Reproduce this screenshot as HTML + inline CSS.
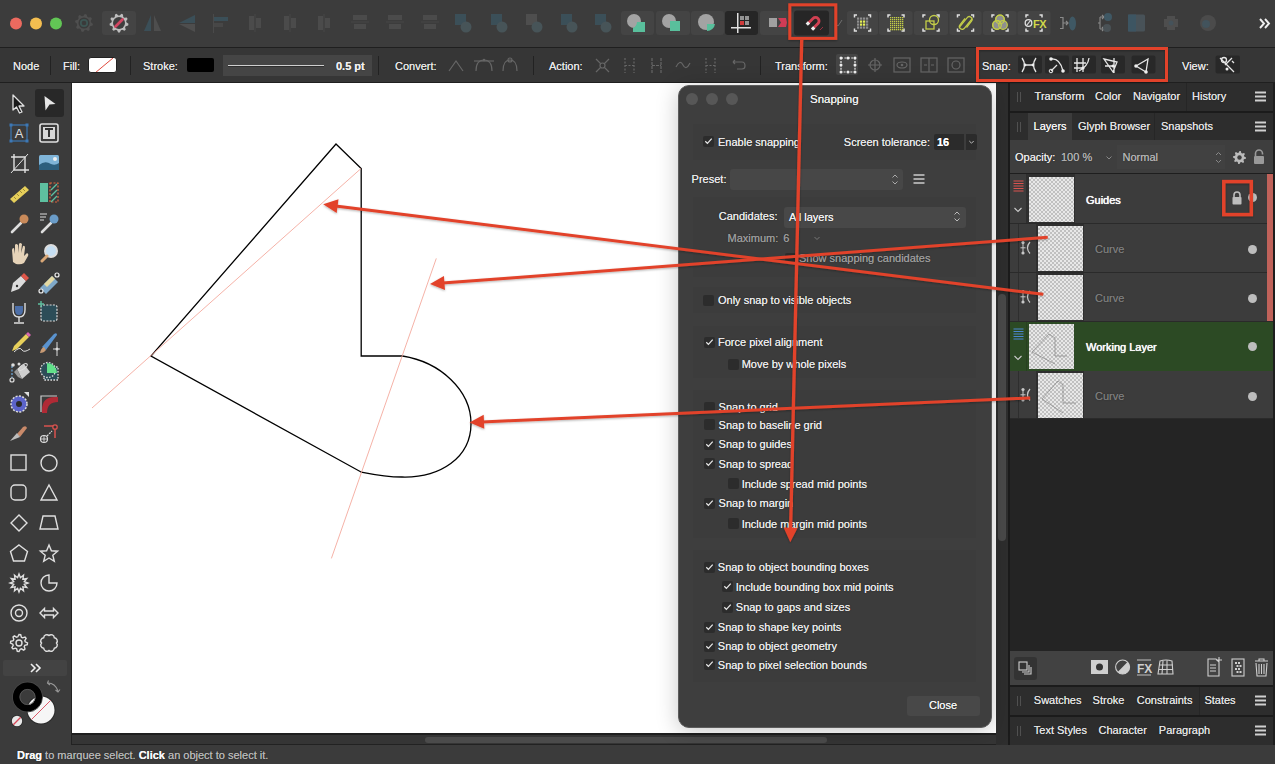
<!DOCTYPE html>
<html><head><meta charset="utf-8">
<style>
*{margin:0;padding:0;box-sizing:border-box}
html,body{width:1275px;height:764px;overflow:hidden;background:#3b3b3b;font-family:"Liberation Sans",sans-serif;color:#e6e6e6}
.a{position:absolute}
.t{position:absolute;font-size:11px;line-height:13px;white-space:nowrap;text-shadow:0 0 0.5px currentColor,0 0 1.2px rgba(0,0,0,0.55)}
svg{position:absolute;overflow:visible}
</style></head><body>
<div class="a" style="left:0;top:0;width:1275px;height:47px;background:#3c3c3c"></div>
<svg class="a" style="left:0;top:0" width="1275" height="47"><circle cx="16" cy="23.5" r="6" fill="#ec6a5f"/><circle cx="36" cy="23.5" r="6" fill="#f4be50"/><circle cx="56" cy="23.5" r="6" fill="#62c655"/><polygon points="92.96,23.88 92.61,25.61 90.19,26.31 89.43,27.45 89.71,29.96 88.24,30.94 86.04,29.72 84.69,29.99 83.12,31.96 81.39,31.61 80.69,29.19 79.55,28.43 77.04,28.71 76.06,27.24 77.28,25.04 77.01,23.69 75.04,22.12 75.39,20.39 77.81,19.69 78.57,18.55 78.29,16.04 79.76,15.06 81.96,16.28 83.31,16.01 84.88,14.04 86.61,14.39 87.31,16.81 88.45,17.57 90.96,17.29 91.94,18.76 90.72,20.96 90.99,22.31" fill="#4f4f4f"/><circle cx="84" cy="23" r="5.5" fill="#3a3a3a"/><circle cx="84" cy="23" r="3.2" fill="none" stroke="#3d5553" stroke-width="1.8"/><rect x="102" y="11" width="34" height="24" rx="3" fill="#444"/><polygon points="128.46,23.83 128.18,25.46 125.72,26.13 125.07,27.25 125.72,29.72 124.45,30.78 122.13,29.72 120.92,30.16 119.83,32.46 118.17,32.46 117.08,30.16 115.87,29.72 113.55,30.78 112.28,29.72 112.93,27.25 112.28,26.13 109.82,25.46 109.54,23.83 111.62,22.35 111.84,21.08 110.39,18.99 111.22,17.55 113.76,17.76 114.75,16.93 114.99,14.39 116.54,13.82 118.35,15.62 119.65,15.62 121.46,13.82 123.01,14.39 123.25,16.93 124.24,17.76 126.78,17.55 127.61,18.99 126.16,21.08 126.38,22.35" fill="#bdbdbd"/><circle cx="119" cy="23" r="6" fill="#3e3e3e"/><line x1="115.5" y1="26.5" x2="122.5" y2="19.5" stroke="#d24662" stroke-width="2.8" stroke-linecap="round"/><path d="M151 15 L151 31 L144 31 Z" fill="#3b4f58"/><path d="M154 15 L154 31 L161 31 Z" fill="#4e4e4e"/><path d="M195 15 L179 23 L195 23 Z" fill="#3b4f58"/><path d="M195 24 L179 24 L195 32 Z" fill="#4e4e4e"/><rect x="213" y="14" width="1" height="19" fill="#4a4a4a"/><rect x="214" y="17" width="14" height="4" fill="#3b4f58"/><rect x="214" y="23" width="9" height="4" fill="#474747"/><rect x="249" y="16" width="5" height="14" fill="#4b4b4b"/><rect x="256" y="18" width="5" height="10" fill="#4b4b4b"/><rect x="254.5" y="14" width="1" height="18" fill="#474747"/><rect x="284" y="16" width="5" height="14" fill="#4b4b4b"/><rect x="291" y="18" width="5" height="10" fill="#4b4b4b"/><rect x="289.5" y="14" width="1" height="18" fill="#474747"/><rect x="318" y="16" width="5" height="14" fill="#4b4b4b"/><rect x="325" y="18" width="5" height="10" fill="#4b4b4b"/><rect x="323.5" y="14" width="1" height="18" fill="#474747"/><rect x="353" y="15" width="14" height="5" fill="#4b4b4b"/><rect x="354" y="24" width="12" height="5" fill="#4b4b4b"/><rect x="351" y="21.5" width="18" height="1" fill="#474747"/><rect x="388" y="15" width="14" height="5" fill="#4b4b4b"/><rect x="389" y="24" width="12" height="5" fill="#4b4b4b"/><rect x="386" y="21.5" width="18" height="1" fill="#474747"/><rect x="423" y="15" width="14" height="5" fill="#4b4b4b"/><rect x="424" y="24" width="12" height="5" fill="#4b4b4b"/><rect x="421" y="21.5" width="18" height="1" fill="#474747"/><rect x="455" y="14" width="11" height="11" fill="#3b4f58"/><circle cx="466" cy="27" r="5.5" fill="#475458"/><rect x="491" y="14" width="11" height="11" fill="#3b4f58"/><circle cx="502" cy="27" r="5.5" fill="#475458"/><rect x="526" y="14" width="11" height="11" fill="#4e4e4e"/><circle cx="537" cy="27" r="5.5" fill="#475458"/><rect x="561" y="14" width="11" height="11" fill="#3b4f58"/><circle cx="572" cy="27" r="5.5" fill="#475458"/><rect x="595" y="14" width="11" height="11" fill="#3b4f58"/><circle cx="606" cy="27" r="5.5" fill="#475458"/><rect x="621" y="11" width="33" height="24" rx="3" fill="#444"/><rect x="656" y="11" width="34" height="24" rx="3" fill="#444"/><rect x="691" y="11" width="33" height="24" rx="3" fill="#444"/><circle cx="634" cy="21" r="7" fill="#a3a3a3"/><path d="M637 22 L645 22 L645 32 L633 32 L633 28 A7 7 0 0 0 637 22Z" fill="#59bf9c"/><circle cx="669" cy="21" r="7" fill="#a3a3a3"/><rect x="670" y="21" width="10" height="10" fill="#59bf9c"/><circle cx="706" cy="22" r="8" fill="#a3a3a3"/><path d="M707 24 L715 24 A8 8 0 0 1 707 31 Z" fill="#59bf9c"/><rect x="725" y="11" width="33" height="24" rx="3" fill="#262626"/><rect x="737" y="13" width="1.5" height="20" fill="#e0e0e0"/><rect x="731" y="27" width="20" height="1.5" fill="#e0e0e0"/><rect x="740" y="16" width="4" height="4" fill="#949494"/><rect x="745" y="16" width="4" height="4" fill="#949494"/><rect x="740" y="21" width="4" height="4" fill="#cf3b3b"/><rect x="745" y="21" width="4" height="4" fill="#949494"/><rect x="760" y="11" width="33" height="24" rx="3" fill="#444"/><rect x="769" y="18" width="8" height="9" fill="#a0a0a0"/><path d="M778 18 L786 18 L787 22.5 L786 27 L778 27 L781 22.5Z" fill="#cf3b55"/><rect x="794" y="10.5" width="35" height="25" rx="3" fill="#262626"/><path d="M808 23.5 L813 18.5 A3.5 3.5 0 0 1 818 23.5 L813 28.5" fill="none" stroke="#d04052" stroke-width="2.8"/><rect x="806.3" y="21.8" width="3.2" height="3.2" fill="#eee" transform="rotate(45 807.9 23.4)"/><rect x="811.5" y="27" width="3.2" height="3.2" fill="#eee" transform="rotate(45 813.1 28.6)"/><path d="M820 30 L823 27" stroke="#9a3040" stroke-width="1"/><path d="M836 24 L838 26 L842 20" fill="none" stroke="#707070" stroke-width="1"/><rect x="847" y="11" width="31" height="24" rx="2.5" fill="#444"/><rect x="879" y="11" width="33.5" height="24" rx="2.5" fill="#444"/><rect x="914" y="11" width="34" height="24" rx="2.5" fill="#444"/><rect x="949.5" y="11" width="32.0" height="24" rx="2.5" fill="#444"/><rect x="983" y="11" width="33.5" height="24" rx="2.5" fill="#444"/><rect x="1017.5" y="11" width="33.0" height="24" rx="2.5" fill="#444"/><path d="M854.5 17.5 L854.5 15 L857.0 15" fill="none" stroke="#e0e0e0" stroke-width="1.5"/><path d="M854.5 28.5 L854.5 31 L857.0 31" fill="none" stroke="#e0e0e0" stroke-width="1.5"/><path d="M870.5 17.5 L870.5 15 L868.0 15" fill="none" stroke="#e0e0e0" stroke-width="1.5"/><path d="M870.5 28.5 L870.5 31 L868.0 31" fill="none" stroke="#e0e0e0" stroke-width="1.5"/><rect x="857" y="17.5" width="2.2" height="2.2" fill="#8f8f8f"/><rect x="857" y="20.5" width="2.2" height="2.2" fill="#8f8f8f"/><rect x="857" y="23.5" width="2.2" height="2.2" fill="#8f8f8f"/><rect x="857" y="26.5" width="2.2" height="2.2" fill="#8f8f8f"/><rect x="860" y="17.5" width="2.2" height="2.2" fill="#8f8f8f"/><rect x="860" y="20.5" width="2.2" height="2.2" fill="#e4ee57"/><rect x="860" y="23.5" width="2.2" height="2.2" fill="#e4ee57"/><rect x="860" y="26.5" width="2.2" height="2.2" fill="#8f8f8f"/><rect x="863" y="17.5" width="2.2" height="2.2" fill="#8f8f8f"/><rect x="863" y="20.5" width="2.2" height="2.2" fill="#e4ee57"/><rect x="863" y="23.5" width="2.2" height="2.2" fill="#e4ee57"/><rect x="863" y="26.5" width="2.2" height="2.2" fill="#8f8f8f"/><rect x="866" y="17.5" width="2.2" height="2.2" fill="#8f8f8f"/><rect x="866" y="20.5" width="2.2" height="2.2" fill="#8f8f8f"/><rect x="866" y="23.5" width="2.2" height="2.2" fill="#8f8f8f"/><rect x="866" y="26.5" width="2.2" height="2.2" fill="#8f8f8f"/><path d="M888 17.5 L888 15 L890.5 15" fill="none" stroke="#e0e0e0" stroke-width="1.5"/><path d="M888 28.5 L888 31 L890.5 31" fill="none" stroke="#e0e0e0" stroke-width="1.5"/><path d="M904 17.5 L904 15 L901.5 15" fill="none" stroke="#e0e0e0" stroke-width="1.5"/><path d="M904 28.5 L904 31 L901.5 31" fill="none" stroke="#e0e0e0" stroke-width="1.5"/><rect x="890.0" y="17.0" width="1.3" height="1.3" fill="#c3cd48"/><rect x="890.0" y="19.0" width="1.3" height="1.3" fill="#c3cd48"/><rect x="890.0" y="21.0" width="1.3" height="1.3" fill="#c3cd48"/><rect x="890.0" y="23.0" width="1.3" height="1.3" fill="#c3cd48"/><rect x="890.0" y="25.0" width="1.3" height="1.3" fill="#c3cd48"/><rect x="890.0" y="27.0" width="1.3" height="1.3" fill="#c3cd48"/><rect x="890.0" y="29.0" width="1.3" height="1.3" fill="#c3cd48"/><rect x="892.0" y="17.0" width="1.3" height="1.3" fill="#c3cd48"/><rect x="892.0" y="19.0" width="1.3" height="1.3" fill="#c3cd48"/><rect x="892.0" y="21.0" width="1.3" height="1.3" fill="#c3cd48"/><rect x="892.0" y="23.0" width="1.3" height="1.3" fill="#c3cd48"/><rect x="892.0" y="25.0" width="1.3" height="1.3" fill="#c3cd48"/><rect x="892.0" y="27.0" width="1.3" height="1.3" fill="#c3cd48"/><rect x="892.0" y="29.0" width="1.3" height="1.3" fill="#c3cd48"/><rect x="894.0" y="17.0" width="1.3" height="1.3" fill="#c3cd48"/><rect x="894.0" y="19.0" width="1.3" height="1.3" fill="#c3cd48"/><rect x="894.0" y="21.0" width="1.3" height="1.3" fill="#c3cd48"/><rect x="894.0" y="23.0" width="1.3" height="1.3" fill="#c3cd48"/><rect x="894.0" y="25.0" width="1.3" height="1.3" fill="#c3cd48"/><rect x="894.0" y="27.0" width="1.3" height="1.3" fill="#c3cd48"/><rect x="894.0" y="29.0" width="1.3" height="1.3" fill="#c3cd48"/><rect x="896.0" y="17.0" width="1.3" height="1.3" fill="#c3cd48"/><rect x="896.0" y="19.0" width="1.3" height="1.3" fill="#c3cd48"/><rect x="896.0" y="21.0" width="1.3" height="1.3" fill="#c3cd48"/><rect x="896.0" y="23.0" width="1.3" height="1.3" fill="#c3cd48"/><rect x="896.0" y="25.0" width="1.3" height="1.3" fill="#c3cd48"/><rect x="896.0" y="27.0" width="1.3" height="1.3" fill="#c3cd48"/><rect x="896.0" y="29.0" width="1.3" height="1.3" fill="#c3cd48"/><rect x="898.0" y="17.0" width="1.3" height="1.3" fill="#c3cd48"/><rect x="898.0" y="19.0" width="1.3" height="1.3" fill="#c3cd48"/><rect x="898.0" y="21.0" width="1.3" height="1.3" fill="#c3cd48"/><rect x="898.0" y="23.0" width="1.3" height="1.3" fill="#c3cd48"/><rect x="898.0" y="25.0" width="1.3" height="1.3" fill="#c3cd48"/><rect x="898.0" y="27.0" width="1.3" height="1.3" fill="#c3cd48"/><rect x="898.0" y="29.0" width="1.3" height="1.3" fill="#c3cd48"/><rect x="900.0" y="17.0" width="1.3" height="1.3" fill="#c3cd48"/><rect x="900.0" y="19.0" width="1.3" height="1.3" fill="#c3cd48"/><rect x="900.0" y="21.0" width="1.3" height="1.3" fill="#c3cd48"/><rect x="900.0" y="23.0" width="1.3" height="1.3" fill="#c3cd48"/><rect x="900.0" y="25.0" width="1.3" height="1.3" fill="#c3cd48"/><rect x="900.0" y="27.0" width="1.3" height="1.3" fill="#c3cd48"/><rect x="900.0" y="29.0" width="1.3" height="1.3" fill="#c3cd48"/><rect x="902.0" y="17.0" width="1.3" height="1.3" fill="#c3cd48"/><rect x="902.0" y="19.0" width="1.3" height="1.3" fill="#c3cd48"/><rect x="902.0" y="21.0" width="1.3" height="1.3" fill="#c3cd48"/><rect x="902.0" y="23.0" width="1.3" height="1.3" fill="#c3cd48"/><rect x="902.0" y="25.0" width="1.3" height="1.3" fill="#c3cd48"/><rect x="902.0" y="27.0" width="1.3" height="1.3" fill="#c3cd48"/><rect x="902.0" y="29.0" width="1.3" height="1.3" fill="#c3cd48"/><path d="M923 17.5 L923 15 L925.5 15" fill="none" stroke="#e0e0e0" stroke-width="1.5"/><path d="M923 28.5 L923 31 L925.5 31" fill="none" stroke="#e0e0e0" stroke-width="1.5"/><path d="M939 17.5 L939 15 L936.5 15" fill="none" stroke="#e0e0e0" stroke-width="1.5"/><path d="M939 28.5 L939 31 L936.5 31" fill="none" stroke="#e0e0e0" stroke-width="1.5"/><rect x="926" y="21" width="8" height="8" fill="none" stroke="#c3cd48" stroke-width="1.3"/><circle cx="934" cy="20" r="4.5" fill="none" stroke="#c3cd48" stroke-width="1.3"/><path d="M957.5 17.5 L957.5 15 L960.0 15" fill="none" stroke="#e0e0e0" stroke-width="1.5"/><path d="M957.5 28.5 L957.5 31 L960.0 31" fill="none" stroke="#e0e0e0" stroke-width="1.5"/><path d="M973.5 17.5 L973.5 15 L971.0 15" fill="none" stroke="#e0e0e0" stroke-width="1.5"/><path d="M973.5 28.5 L973.5 31 L971.0 31" fill="none" stroke="#e0e0e0" stroke-width="1.5"/><path d="M959.5 27 L967 17.8 A2.8 2.8 0 0 1 971.5 21.2 L966.5 27.5" fill="none" stroke="#c3cd48" stroke-width="1.3"/><path d="M965 18.5 L960 24.8 A2.8 2.8 0 0 0 964.5 28.2 L972 19" fill="none" stroke="#c3cd48" stroke-width="1.3"/><path d="M992 17.5 L992 15 L994.5 15" fill="none" stroke="#e0e0e0" stroke-width="1.5"/><path d="M992 28.5 L992 31 L994.5 31" fill="none" stroke="#e0e0e0" stroke-width="1.5"/><path d="M1008 17.5 L1008 15 L1005.5 15" fill="none" stroke="#e0e0e0" stroke-width="1.5"/><path d="M1008 28.5 L1008 31 L1005.5 31" fill="none" stroke="#e0e0e0" stroke-width="1.5"/><circle cx="1000" cy="19.5" r="4.3" fill="#8f8f8f" stroke="#c3cd48" stroke-width="1.2"/><circle cx="997" cy="25" r="4.3" fill="#8f8f8f" stroke="#c3cd48" stroke-width="1.2"/><circle cx="1003" cy="25" r="4.3" fill="#8f8f8f" stroke="#c3cd48" stroke-width="1.2"/><circle cx="1000" cy="19.5" r="4.3" fill="none" stroke="#c3cd48" stroke-width="1.2"/><circle cx="997" cy="25" r="4.3" fill="none" stroke="#c3cd48" stroke-width="1.2"/><path d="M1026 17.5 L1026 15 L1028.5 15" fill="none" stroke="#e0e0e0" stroke-width="1.5"/><path d="M1026 28.5 L1026 31 L1028.5 31" fill="none" stroke="#e0e0e0" stroke-width="1.5"/><path d="M1042 17.5 L1042 15 L1039.5 15" fill="none" stroke="#e0e0e0" stroke-width="1.5"/><path d="M1042 28.5 L1042 31 L1039.5 31" fill="none" stroke="#e0e0e0" stroke-width="1.5"/><circle cx="1028.5" cy="23" r="3.3" fill="none" stroke="#e0e0e0" stroke-width="1.3"/><line x1="1026.5" y1="25.5" x2="1030.5" y2="20.5" stroke="#e0e0e0" stroke-width="1.2"/><text x="1033" y="27.5" font-family="Liberation Sans" font-weight="bold" font-size="11" fill="#d0d94a" letter-spacing="-0.5">FX</text><path d="M1060 17.5 L1063 17.5 L1063 28.5 L1060 28.5 M1063 23 L1068 23 M1066 21 L1068 23 L1066 25" fill="none" stroke="#8a8a8a" stroke-width="1.2"/><ellipse cx="1072.5" cy="23.5" rx="3.5" ry="7" fill="#3f5864"/><path d="M1098 23 L1100 23 M1100 17 L1100 29 M1100 17 L1104 17 M1100 29 L1104 29 M1102 15 L1104 17 L1102 19 M1102 27 L1104 29 L1102 31" fill="none" stroke="#8a8a8a" stroke-width="1.1"/><circle cx="1108" cy="17" r="4" fill="#3f5864"/><circle cx="1107" cy="28" r="4" fill="#4a5256"/><rect x="1128" y="14.5" width="17" height="17" rx="1.5" fill="#485258"/><rect x="1128" y="14.5" width="8" height="17" fill="#3d5562"/><path d="M1167 16 H1175 V19 H1178 V27 H1175 V30 H1167 V27 H1164 V19 H1167Z" fill="#4e4e4e"/><circle cx="1171" cy="23" r="2.5" fill="#45525a"/><circle cx="1208" cy="23" r="8" fill="#4b4b4b"/><circle cx="1206" cy="24" r="4" fill="#42535c"/><path d="M1260 19 L1264 23.5 L1260 28 M1265 19 L1269 23.5 L1265 28" fill="none" stroke="#f0f0f0" stroke-width="1.9"/></svg>
<div class="a" style="left:0;top:47px;width:1275px;height:1px;background:#1f1f1f"></div>
<div class="a" style="left:0;top:48px;width:1275px;height:34px;background:#363636"></div>
<div class="t" style="left:13px;top:59.8px;color:#e6e6e6;font-weight:normal;">Node</div><div class="a" style="left:50px;top:56px;width:1px;height:19px;background:#222"></div><div class="t" style="left:63px;top:59.8px;color:#e6e6e6;font-weight:normal;">Fill:</div><div class="a" style="left:88px;top:57px;width:29px;height:16px;border-radius:3px;background:#fff;border:1px solid #222;overflow:hidden"><svg width="29" height="16" style="left:0;top:0"><line x1="6" y1="15" x2="24" y2="0" stroke="#e04a3c" stroke-width="1"/></svg></div><div class="a" style="left:130px;top:56px;width:1px;height:19px;background:#222"></div><div class="t" style="left:143px;top:59.8px;color:#e6e6e6;font-weight:normal;">Stroke:</div><div class="a" style="left:187px;top:58px;width:27px;height:14px;border-radius:2px;background:#000"></div><div class="a" style="left:223px;top:55px;width:149px;height:21px;background:#454545"></div><div class="a" style="left:228px;top:64.5px;width:96px;height:1.5px;background:#cfcfcf"></div><div class="a" style="left:228px;top:66px;width:96px;height:1px;background:#2e2e2e"></div><div class="t" style="left:336px;top:59.8px;color:#eee;font-weight:bold;">0.5 pt</div><div class="a" style="left:378px;top:56px;width:1px;height:19px;background:#222"></div><div class="t" style="left:395px;top:59.8px;color:#e6e6e6;font-weight:normal;">Convert:</div><div class="a" style="left:533px;top:56px;width:1px;height:19px;background:#222"></div><div class="t" style="left:549px;top:59.8px;color:#e6e6e6;font-weight:normal;">Action:</div><div class="a" style="left:760px;top:56px;width:1px;height:19px;background:#222"></div><div class="t" style="left:775px;top:59.8px;color:#e6e6e6;font-weight:normal;">Transform:</div><div class="t" style="left:982px;top:59.8px;color:#e6e6e6;font-weight:normal;">Snap:</div><div class="t" style="left:1182px;top:59.8px;color:#e6e6e6;font-weight:normal;">View:</div><svg class="a" style="left:0;top:0" width="1275" height="83"><path d="M449 71 L456 61 L463 71" fill="none" stroke="#666" stroke-width="1.2"/><path d="M476 71 Q476 60 484 60 Q492 60 492 71" fill="none" stroke="#666" stroke-width="1.2"/><path d="M474 61 L494 61" fill="none" stroke="#666" stroke-width="1.2"/><circle cx="484" cy="60" r="1.2" fill="#666"/><path d="M503 71 Q503 60 510 60 Q517 60 517 71" fill="none" stroke="#666" stroke-width="1.2"/><circle cx="510" cy="60" r="2" fill="none" stroke="#666" stroke-width="1.2"/><path d="M596 59 L609 72 M609 59 L596 72" fill="none" stroke="#666" stroke-width="1.2"/><circle cx="602.5" cy="65.5" r="2.5" fill="#343434" stroke="#666" stroke-width="1.2"/><path d="M625 58 L625 73 M634 58 L634 73 M625 65.5 L634 65.5" fill="none" stroke="#666" stroke-width="1.2" stroke-dasharray="2 1.5"/><path d="M652 58 L652 73 M661 58 L661 73 M652 65.5 L661 65.5" fill="none" stroke="#666" stroke-width="1.2" stroke-dasharray="3 1"/><path d="M676 67 Q680 59 683 65 Q686 71 690 63" fill="none" stroke="#666" stroke-width="1.2"/><path d="M706 58 L706 73 M715 58 L715 73 M706 65.5 L715 65.5" fill="none" stroke="#666" stroke-width="1.2" stroke-dasharray="2 1.5"/><path d="M733 62 L742 62 Q745 62 745 66 Q745 69 742 69 L737 69 M733 62 L735 60 M733 62 L735 64" fill="none" stroke="#666" stroke-width="1.2"/><rect x="836" y="54" width="22" height="21" rx="2" fill="#454545"/><rect x="841" y="58" width="14" height="14" fill="none" stroke="#e8e8e8" stroke-width="1.2" stroke-dasharray="2 1.4"/><circle cx="841" cy="58" r="1.5" fill="#eee"/><circle cx="848" cy="58" r="1.5" fill="#eee"/><circle cx="855" cy="58" r="1.5" fill="#eee"/><circle cx="841" cy="65" r="1.5" fill="#eee"/><circle cx="855" cy="65" r="1.5" fill="#eee"/><circle cx="841" cy="72" r="1.5" fill="#eee"/><circle cx="848" cy="72" r="1.5" fill="#eee"/><circle cx="855" cy="72" r="1.5" fill="#eee"/><circle cx="875" cy="65" r="5" fill="none" stroke="#666" stroke-width="1.2"/><path d="M868 65 L882 65 M875 58 L875 72" fill="none" stroke="#666" stroke-width="1.2"/><rect x="894" y="58" width="16" height="14" fill="none" stroke="#666" stroke-width="1.2"/><ellipse cx="902" cy="65" rx="5" ry="3" fill="none" stroke="#666" stroke-width="1.2"/><circle cx="902" cy="65" r="1.3" fill="#666"/><rect x="921" y="58" width="16" height="14" fill="none" stroke="#666" stroke-width="1.2"/><path d="M929 58 L929 72 M924 65 L927 65 M931 65 L934 65" fill="none" stroke="#666" stroke-width="1.2"/><rect x="948" y="58" width="16" height="14" fill="none" stroke="#666" stroke-width="1.2"/><circle cx="956" cy="65" r="4" fill="none" stroke="#666" stroke-width="1.2"/><rect x="1018" y="55.5" width="24" height="18" rx="2" fill="#282828"/><rect x="1045" y="55.5" width="24" height="18" rx="2" fill="#282828"/><rect x="1072" y="55.5" width="24" height="18" rx="2" fill="#282828"/><rect x="1101" y="55.5" width="24" height="18" rx="2" fill="#282828"/><rect x="1131.5" y="55.5" width="24" height="18" rx="2" fill="#282828"/><rect x="1215.5" y="55.5" width="24.5" height="18" rx="2" fill="#282828"/><path d="M1022 58 Q1027 65 1022 72 M1036 58 Q1031 65 1036 72 M1025 65 L1033 65" fill="none" stroke="#e6e6e6" stroke-width="1.3"/><circle cx="1025" cy="65" r="1.4" fill="#eee"/><circle cx="1033" cy="65" r="1.4" fill="#eee"/><path d="M1051 59 Q1060 58 1063 71" fill="none" stroke="#e6e6e6" stroke-width="1.3"/><path d="M1051 71 L1057 65" fill="none" stroke="#e6e6e6" stroke-width="1.3"/><circle cx="1051" cy="59" r="1.8" fill="#eee"/><circle cx="1063" cy="71" r="1.8" fill="#eee"/><circle cx="1051" cy="71" r="1.8" fill="none" stroke="#eee" stroke-width="1"/><path d="M1077 58 L1077 72 M1083 58 L1083 72 M1074 63 L1086 63 M1074 68 L1083 68" fill="none" stroke="#e6e6e6" stroke-width="1.3"/><path d="M1079 71 Q1088 66 1089 58" fill="none" stroke="#e6e6e6" stroke-width="1.3"/><circle cx="1083" cy="68" r="1.6" fill="#eee"/><path d="M1104 59 L1117 62 L1113 72 Z M1114 58 L1114 73 M1105 66 L1113 66" fill="none" stroke="#e6e6e6" stroke-width="1.3"/><circle cx="1113" cy="66" r="1.6" fill="#eee"/><path d="M1136 66 L1148 59 L1146 72 Z" fill="none" stroke="#e6e6e6" stroke-width="1.3"/><circle cx="1136" cy="66" r="1.8" fill="#eee"/><circle cx="1146" cy="72" r="1.8" fill="#eee"/><circle cx="1224" cy="60" r="2.5" fill="none" stroke="#e6e6e6" stroke-width="1.3"/><path d="M1220 58 L1234 72 M1232 58 L1225 65 M1232 61 L1234 63" fill="none" stroke="#e6e6e6" stroke-width="1.3"/><circle cx="1227" cy="69" r="1.5" fill="#eee"/></svg>
<div class="a" style="left:0;top:82px;width:1275px;height:1px;background:#1f1f1f"></div>
<div class="a" style="left:0;top:83px;width:71px;height:662px;background:#3b3b3b"></div>
<div class="a" style="left:71px;top:83px;width:1px;height:662px;background:#222"></div>
<svg class="a" style="left:0;top:0" width="72" height="745"><rect x="35" y="89" width="29" height="28" rx="3" fill="#282828"/><path d="M13 95 L13 110 L16.5 107 L19.5 113 L22 112 L19 106 L24 106 Z" fill="#1a1a1a" stroke="#e0e0e0" stroke-width="1.3" stroke-linejoin="round"/><path d="M44.5 96 L55.5 104 L49.5 104.5 L45.5 110.5 Z" fill="#e6e6e6"/><rect x="11" y="125" width="16" height="16" fill="none" stroke="#3d78b5" stroke-width="1.2"/><rect x="9.5" y="123.5" width="3" height="3" fill="#3d78b5"/><rect x="25.5" y="123.5" width="3" height="3" fill="#3d78b5"/><rect x="9.5" y="139.5" width="3" height="3" fill="#3d78b5"/><rect x="25.5" y="139.5" width="3" height="3" fill="#3d78b5"/><text x="19" y="138" text-anchor="middle" font-family="Liberation Sans" font-size="13" fill="#ddd">A</text><rect x="40" y="124" width="18" height="18" rx="2" fill="none" stroke="#e0e0e0" stroke-width="1.6"/><rect x="43" y="127" width="12" height="12" fill="#d8d8d8"/><path d="M45 129 L53 129 M49 129 L49 137" stroke="#333" stroke-width="2"/><path d="M14 154 L14 170 L29 170 M11 157 L25 157 L25 173" fill="none" stroke="#e0e0e0" stroke-width="1.4" stroke-width="2"/><path d="M11 173 L28 154" stroke="#e0e0e0" stroke-width="1"/><rect x="39" y="155" width="20" height="15" rx="1.5" fill="#7fb4d8"/><path d="M39 165 Q45 160 51 164 Q55 166 59 163 L59 170 L39 170Z" fill="#2d5f7e"/><circle cx="55" cy="159" r="2" fill="#eee"/><path d="M10 199 L25 186 L29 190 L14 203Z" fill="#e6cf5a"/><path d="M14 197 L16 199 M17 194 L19 196 M20 191 L22 193 M23 189 L25 191" stroke="#8a7a30" stroke-width="0.8"/><rect x="40" y="183" width="8" height="19" fill="#5ec0a0"/><rect x="50" y="183" width="8" height="19" fill="none" stroke="#e0663f" stroke-width="1.2" stroke-dasharray="2 1.5"/><path d="M51 190 L57 184 M51 196 L57 190 M51 202 L57 196" stroke="#5ec0a0" stroke-width="1.4"/><path d="M12 232 L21 223" stroke="#ddd" stroke-width="2.6" stroke-linecap="round"/><circle cx="24" cy="219" r="4.5" fill="#c98a5a"/><path d="M42 232 L51 223" stroke="#ddd" stroke-width="2.6" stroke-linecap="round"/><circle cx="54" cy="219" r="4.5" fill="#6a9cc8"/><path d="M40 214 L47 214 M40 217 L46 217 M40 220 L44 220" stroke="#ddd" stroke-width="1"/><path d="M13 262 L12 250 Q12 248 14 248 L15 254 L15 245 Q16 243 18 245 L18 253 L19 244 Q20 242 22 244 L21 253 L23 246 Q25 245 25 248 L24 256 L27 253 Q29 254 28 256 L24 263 Q21 265 16 264Z" fill="#e6d3b8"/><circle cx="51" cy="251" r="6" fill="#c5def2" stroke="#ddd" stroke-width="2"/><path d="M42 261 L47 256" stroke="#d9a777" stroke-width="3" stroke-linecap="round"/><path d="M11 292 L13 283 L21 276 L26 281 L19 289 Z" fill="#ddd"/><path d="M21 276 L24 273 L29 278 L26 281Z" fill="#e0574a"/><circle cx="17" cy="286" r="1.2" fill="#333"/><path d="M40 288 L52 276 L58 282 L46 294Z" fill="#7fa8c8"/><path d="M44 284 L52 276 L55 279 L47 287Z" fill="#e4d9a2"/><circle cx="41" cy="291" r="2" fill="#333" stroke="#eee" stroke-width="1.2"/><circle cx="57" cy="275" r="2" fill="#333" stroke="#eee" stroke-width="1.2"/><path d="M13 303 L13 310 Q13 317 19 317 Q25 317 25 310 L25 303" fill="none" stroke="#ddd" stroke-width="1.4"/><path d="M15 306 L23 306 L23 310 Q23 315 19 315 Q15 315 15 310Z" fill="#4d6fa8"/><path d="M19 317 L19 322 M14 323 L24 323" stroke="#ddd" stroke-width="1.4"/><rect x="41" y="305" width="16" height="16" rx="2" fill="#2c4d58" stroke="#ddd" stroke-width="1.2" stroke-dasharray="2 1.3"/><path d="M41 301 L41 307 M38 304 L44 304" stroke="#5ec0a0" stroke-width="1.4"/><path d="M12 351 L14 346 L26 334 L29 337 L17 349Z" fill="#e6cf5a"/><path d="M26 334 L28 332 L31 335 L29 337Z" fill="#d866b0"/><path d="M14 352 Q20 346 22 350 Q24 353 30 349" fill="none" stroke="#ddd" stroke-width="1"/><path d="M42 347 L54 334 Q57 332 57 335 L46 350Z" fill="#5a93cf"/><path d="M40 353 Q41 348 44 347 L46 350 Q44 353 40 353Z" fill="#c79a74"/><path d="M57 342 L57 356 M53 349 L60 349" stroke="#ddd" stroke-width="1"/><circle cx="57" cy="349" r="1.5" fill="#ddd"/><path d="M17 369 L24 364 L30 372 L22 379 Z" fill="#cfcfcf"/><path d="M17 369 L22 379 L18 377 L14 372Z" fill="#9a9a9a"/><ellipse cx="23" cy="367" rx="5" ry="2" fill="none" stroke="#ddd" stroke-width="1" transform="rotate(-35 23 367)"/><path d="M12 366 L12 378" stroke="#6a9cc8" stroke-width="1.4" stroke-dasharray="2 1.5"/><circle cx="12" cy="380" r="2" fill="none" stroke="#ddd" stroke-width="1.2"/><circle cx="13" cy="365" r="1.8" fill="#ddd"/><circle cx="19" cy="364" r="1.5" fill="#ddd"/><rect x="44" y="367" width="14" height="13" fill="#2c4d58" stroke="#ddd" stroke-width="1.3" stroke-dasharray="1.6 1.4"/><circle cx="48" cy="370" r="7.5" fill="#2c4d58" stroke="#ddd" stroke-width="1.3" stroke-dasharray="1.6 1.4"/><path d="M46 368 L46 362 A10 10 0 0 1 56 372 L46 372Z" fill="#62e08a" transform="translate(1 1)"/><circle cx="19" cy="404" r="8" fill="#5b63c9" stroke="#ddd" stroke-width="1.5" stroke-dasharray="2 1.4"/><circle cx="19" cy="404" r="3" fill="#2a2a2a"/><path d="M24 392 L29 392 L29 397Z" fill="#ddd"/><path d="M41 412 L41 396 L57 396" fill="none" stroke="#ccc" stroke-width="1.2"/><path d="M42 413 L42 410 Q42 397 55 397 L58 397 L58 402 Q47 402 47 413Z" fill="#b02a35"/><path d="M17 434 L23 427 Q26 425 27 428 L20 437Z" fill="#c98a6a"/><path d="M10 441 L17 433 L20 437 Z" fill="#bdbdbd"/><circle cx="44" cy="439" r="3.5" fill="none" stroke="#ddd" stroke-width="1.2"/><path d="M44 435.5 L44 442.5 M40.5 439 L47.5 439" stroke="#ddd" stroke-width="0.9"/><path d="M47 436 L52 431" stroke="#ddd" stroke-width="1.2" stroke-dasharray="2 1"/><path d="M44 426 L55 426 M55 429 L55 438" fill="none" stroke="#d9534f" stroke-width="1.5"/><circle cx="55" cy="427" r="2.2" fill="#333" stroke="#d9534f" stroke-width="1.3"/><rect x="11" y="455" width="15" height="15" fill="none" stroke="#e0e0e0" stroke-width="1.4"/><circle cx="49" cy="463" r="8" fill="none" stroke="#e0e0e0" stroke-width="1.4"/><rect x="11" y="485" width="15" height="15" rx="4" fill="none" stroke="#e0e0e0" stroke-width="1.4"/><path d="M49 485 L57 500 L41 500Z" fill="none" stroke="#e0e0e0" stroke-width="1.4"/><path d="M19 515 L27 523 L19 531 L11 523Z" fill="none" stroke="#e0e0e0" stroke-width="1.4"/><path d="M43 516 L55 516 L58 529 L40 529Z" fill="none" stroke="#e0e0e0" stroke-width="1.4"/><path d="M19 545 L27.5 551.5 L24.5 561 L13.5 561 L10.5 551.5Z" fill="none" stroke="#e0e0e0" stroke-width="1.4"/><polygon points="49.0,545.0 51.4,550.8 57.6,551.2 52.8,555.2 54.3,561.3 49.0,558.0 43.7,561.3 45.2,555.2 40.4,551.2 46.6,550.8" fill="none" stroke="#e0e0e0" stroke-width="1.4"/><polygon points="28.0,583.0 24.3,584.4 26.8,587.5 22.9,586.9 23.5,590.8 20.4,588.3 19.0,592.0 17.6,588.3 14.5,590.8 15.1,586.9 11.2,587.5 13.7,584.4 10.0,583.0 13.7,581.6 11.2,578.5 15.1,579.1 14.5,575.2 17.6,577.7 19.0,574.0 20.4,577.7 23.5,575.2 22.9,579.1 26.8,578.5 24.3,581.6" fill="none" stroke="#e0e0e0" stroke-width="1.4"/><path d="M49 583 L49 575 A8 8 0 1 0 57 583Z" fill="none" stroke="#e0e0e0" stroke-width="1.4"/><circle cx="19" cy="613" r="8" fill="none" stroke="#e0e0e0" stroke-width="1.4"/><circle cx="19" cy="613" r="3.5" fill="none" stroke="#e0e0e0" stroke-width="1.4"/><path d="M40 613 L44.5 608.5 L44.5 611 L53.5 611 L53.5 608.5 L58 613 L53.5 617.5 L53.5 615 L44.5 615 L44.5 617.5 Z" fill="none" stroke="#e0e0e0" stroke-width="1.4"/><polygon points="27.5,643.0 27.3,644.7 24.8,645.4 24.2,646.5 25.0,649.0 23.7,650.1 21.4,648.8 20.2,649.2 19.0,651.5 17.3,651.3 16.6,648.8 15.5,648.2 13.0,649.0 11.9,647.7 13.2,645.4 12.8,644.2 10.5,643.0 10.7,641.3 13.2,640.6 13.8,639.5 13.0,637.0 14.3,635.9 16.6,637.2 17.8,636.8 19.0,634.5 20.7,634.7 21.4,637.2 22.5,637.8 25.0,637.0 26.1,638.3 24.8,640.6 25.2,641.8" fill="none" stroke="#e0e0e0" stroke-width="1.4"/><circle cx="19" cy="643" r="3" fill="none" stroke="#e0e0e0" stroke-width="1.4"/><path d="M56.5 643 A3.2 3.2 0 0 1 54.3 648.3 A3.2 3.2 0 0 1 49.0 650.5 A3.2 3.2 0 0 1 43.7 648.3 A3.2 3.2 0 0 1 41.5 643.0 A3.2 3.2 0 0 1 43.7 637.7 A3.2 3.2 0 0 1 49.0 635.5 A3.2 3.2 0 0 1 54.3 637.7 A3.2 3.2 0 0 1 56.5 643.0 Z" fill="none" stroke="#e0e0e0" stroke-width="1.4"/><rect x="3" y="660" width="64" height="16" rx="2" fill="#434343"/><path d="M31 664 L35 668 L31 672 M36 664 L40 668 L36 672" fill="none" stroke="#f0f0f0" stroke-width="1.6"/><circle cx="41" cy="710" r="14.5" fill="#2a2a2a"/><circle cx="41" cy="710" r="13.5" fill="#f6f6f6"/><line x1="31.5" y1="719.5" x2="50.5" y2="700.5" stroke="#d94a5a" stroke-width="0.9"/><circle cx="27.5" cy="697" r="15" fill="none" stroke="#4a4a4a" stroke-width="1"/><circle cx="27.5" cy="697" r="11.3" fill="none" stroke="#000" stroke-width="6.6"/><circle cx="27.5" cy="697" r="7.6" fill="none" stroke="#5a5a5a" stroke-width="0.8"/><circle cx="17" cy="721" r="6" fill="#2a2a2a"/><circle cx="17" cy="721" r="5.2" fill="#e8e8e8"/><line x1="13.3" y1="724.7" x2="20.7" y2="717.3" stroke="#d94a5a" stroke-width="1.3"/><path d="M48 683 Q55 683 58 691" fill="none" stroke="#999" stroke-width="1.2"/><path d="M48.5 680.5 L47.5 683 L50 685 M55.5 690 L58 692 L60 689.5" fill="none" stroke="#999" stroke-width="1.1"/></svg>
<div class="a" style="left:72px;top:83px;width:924px;height:650px;background:#fff"></div>
<svg class="a" style="left:0;top:0" width="1275" height="764"><path d="M336 144 L361.2 168.5 L361.2 356 L402.5 356 C440 362 471 390 471 423.5 C471 458 440 478 402 477 C385 477 371 474 361 472 L151 356 Z" fill="none" stroke="#000" stroke-width="1.3" stroke-linejoin="miter"/><line x1="92" y1="408" x2="361" y2="168.5" stroke="#f3a497" stroke-width="0.85"/><line x1="436.3" y1="258.4" x2="331.4" y2="558.4" stroke="#f3a497" stroke-width="0.85"/></svg>
<div class="a" style="left:72px;top:733px;width:936px;height:12px;background:#353535;border-top:2px solid #1f1f1f;border-bottom:1px solid #222"></div>
<div class="a" style="left:425px;top:736.5px;width:402px;height:6.5px;border-radius:3.5px;background:#4b4b4b"></div>
<div class="a" style="left:996px;top:83px;width:12px;height:662px;background:#2e2e2e"></div>
<div class="a" style="left:998px;top:294px;width:8px;height:247px;border-radius:4px;background:#4a4a4a"></div>
<div class="a" style="left:1008px;top:83px;width:2px;height:662px;background:#1b1b1b"></div>
<div class="a" style="left:677.5px;top:84.5px;width:314.5px;height:643.5px;border-radius:11px;box-shadow:0 3px 22px rgba(0,0,0,0.22)"></div><div class="a" style="left:677.5px;top:84.5px;width:314.5px;height:643.5px;border-radius:11px;background:#3e3e3e;border:1px solid #5c5c5c"></div><div class="a" style="left:686px;top:92.7px;width:12px;height:12px;border-radius:6px;background:#575757"></div><div class="a" style="left:706px;top:92.7px;width:12px;height:12px;border-radius:6px;background:#575757"></div><div class="a" style="left:726px;top:92.7px;width:12px;height:12px;border-radius:6px;background:#575757"></div><div class="t" style="left:810px;top:92.8px;font-size:11.5px;color:#f0f0f0">Snapping</div><div class="a" style="left:693px;top:124px;width:283px;height:36px;background:#3c3c3c"></div><div class="a" style="left:693px;top:197px;width:283px;height:80px;background:#3c3c3c"></div><div class="a" style="left:693px;top:287px;width:283px;height:26px;background:#3c3c3c"></div><div class="a" style="left:693px;top:326px;width:283px;height:52px;background:#3c3c3c"></div><div class="a" style="left:693px;top:390px;width:283px;height:148px;background:#3c3c3c"></div><div class="a" style="left:693px;top:550px;width:283px;height:132px;background:#3c3c3c"></div><div class="a" style="left:703px;top:136.3px;width:11px;height:11px;border-radius:2px;background:#2c2c2c"></div><svg class="a" style="left:703px;top:136.3px" width="11" height="11"><path d="M2.3 5.3 L4.4 7.4 L8.7 2.7" fill="none" stroke="#e8e8e8" stroke-width="1.25"/></svg><div class="t" style="left:718px;top:135.6px;font-size:11px;color:#e8e8e8;font-weight:normal">Enable snapping</div><div class="t" style="left:843.8px;top:135.6px;font-size:11px;color:#e8e8e8;font-weight:normal">Screen tolerance:</div><div class="a" style="left:934px;top:134px;width:30px;height:16px;background:#2b2b2b;border-radius:2px 0 0 2px"></div><div class="a" style="left:966px;top:134px;width:11px;height:16px;background:#2b2b2b;border-radius:0 2px 2px 0"></div><div class="t" style="left:937px;top:135.6px;font-size:11px;color:#fff;font-weight:bold">16</div><svg class="a" style="left:966px;top:134px" width="11" height="16"><path d="M3.3 7 L5.5 9.2 L7.7 7" fill="none" stroke="#bbb" stroke-width="1"/></svg><div class="t" style="left:691.6px;top:173.1px;font-size:11px;color:#e8e8e8;font-weight:normal">Preset:</div><div class="a" style="left:730px;top:169px;width:173px;height:21px;background:#474747;border-radius:3px"></div><svg class="a" style="left:889px;top:172px" width="12" height="16"><path d="M3.5 5.5 L6 3 L8.5 5.5 M3.5 9.5 L6 12 L8.5 9.5" fill="none" stroke="#aaa" stroke-width="1"/></svg><svg class="a" style="left:913px;top:173px" width="12" height="12"><path d="M0.5 2 H11.5 M0.5 6 H11.5 M0.5 10 H11.5" stroke="#ccc" stroke-width="1.5"/></svg><div class="t" style="left:718.8px;top:210.3px;font-size:11px;color:#e8e8e8;font-weight:normal">Candidates:</div><div class="a" style="left:784px;top:207px;width:182px;height:21px;background:#484848;border-radius:3px"></div><div class="t" style="left:789px;top:210.8px;font-size:11px;color:#f0f0f0;font-weight:normal">All layers</div><svg class="a" style="left:951px;top:209px" width="12" height="16"><path d="M3.5 5.5 L6 3 L8.5 5.5 M3.5 9.5 L6 12 L8.5 9.5" fill="none" stroke="#bbb" stroke-width="1"/></svg><div class="t" style="left:727.6px;top:232.2px;font-size:11px;color:#9a9a9a;font-weight:normal">Maximum:</div><div class="t" style="left:783.2px;top:232.2px;font-size:11px;color:#9a9a9a;font-weight:normal">6</div><svg class="a" style="left:812px;top:233px" width="10" height="10"><path d="M2.5 4 L5 6.5 L7.5 4" fill="none" stroke="#777" stroke-width="1"/></svg><div class="a" style="left:785px;top:252.5px;width:11px;height:11px;border-radius:2px;background:#2c2c2c"></div><div class="t" style="left:799px;top:251.8px;font-size:11px;color:#9a9a9a;font-weight:normal">Show snapping candidates</div><div class="a" style="left:703px;top:294.5px;width:11px;height:11px;border-radius:2px;background:#2c2c2c"></div><div class="t" style="left:718px;top:293.8px;font-size:11px;color:#e8e8e8;font-weight:normal">Only snap to visible objects</div><div class="a" style="left:704px;top:337.0px;width:11px;height:11px;border-radius:2px;background:#2c2c2c"></div><svg class="a" style="left:704px;top:337.0px" width="11" height="11"><path d="M2.3 5.3 L4.4 7.4 L8.7 2.7" fill="none" stroke="#e8e8e8" stroke-width="1.25"/></svg><div class="t" style="left:718px;top:336.3px;font-size:11px;color:#e8e8e8;font-weight:normal">Force pixel alignment</div><div class="a" style="left:727.5px;top:359.0px;width:11px;height:11px;border-radius:2px;background:#2c2c2c"></div><div class="t" style="left:741.7px;top:358.3px;font-size:11px;color:#e8e8e8;font-weight:normal">Move by whole pixels</div><div class="a" style="left:704px;top:401.7px;width:11px;height:11px;border-radius:2px;background:#2c2c2c"></div><div class="t" style="left:718.6px;top:401.0px;font-size:11px;color:#e8e8e8;font-weight:normal">Snap to grid</div><div class="a" style="left:704px;top:419.3px;width:11px;height:11px;border-radius:2px;background:#2c2c2c"></div><div class="t" style="left:718.6px;top:418.6px;font-size:11px;color:#e8e8e8;font-weight:normal">Snap to baseline grid</div><div class="a" style="left:704px;top:438.5px;width:11px;height:11px;border-radius:2px;background:#2c2c2c"></div><svg class="a" style="left:704px;top:438.5px" width="11" height="11"><path d="M2.3 5.3 L4.4 7.4 L8.7 2.7" fill="none" stroke="#e8e8e8" stroke-width="1.25"/></svg><div class="t" style="left:718.6px;top:437.8px;font-size:11px;color:#e8e8e8;font-weight:normal">Snap to guides</div><div class="a" style="left:704px;top:458.3px;width:11px;height:11px;border-radius:2px;background:#2c2c2c"></div><svg class="a" style="left:704px;top:458.3px" width="11" height="11"><path d="M2.3 5.3 L4.4 7.4 L8.7 2.7" fill="none" stroke="#e8e8e8" stroke-width="1.25"/></svg><div class="t" style="left:718.6px;top:457.6px;font-size:11px;color:#e8e8e8;font-weight:normal">Snap to spread</div><div class="a" style="left:727.5px;top:478.4px;width:11px;height:11px;border-radius:2px;background:#2c2c2c"></div><div class="t" style="left:741.7px;top:477.7px;font-size:11px;color:#e8e8e8;font-weight:normal">Include spread mid points</div><div class="a" style="left:704px;top:498.1px;width:11px;height:11px;border-radius:2px;background:#2c2c2c"></div><svg class="a" style="left:704px;top:498.1px" width="11" height="11"><path d="M2.3 5.3 L4.4 7.4 L8.7 2.7" fill="none" stroke="#e8e8e8" stroke-width="1.25"/></svg><div class="t" style="left:718.6px;top:497.4px;font-size:11px;color:#e8e8e8;font-weight:normal">Snap to margin</div><div class="a" style="left:727.5px;top:518.2px;width:11px;height:11px;border-radius:2px;background:#2c2c2c"></div><div class="t" style="left:741.7px;top:517.5px;font-size:11px;color:#e8e8e8;font-weight:normal">Include margin mid points</div><div class="a" style="left:704px;top:561.7px;width:11px;height:11px;border-radius:2px;background:#2c2c2c"></div><svg class="a" style="left:704px;top:561.7px" width="11" height="11"><path d="M2.3 5.3 L4.4 7.4 L8.7 2.7" fill="none" stroke="#e8e8e8" stroke-width="1.25"/></svg><div class="t" style="left:717.8px;top:561.0px;font-size:11px;color:#e8e8e8;font-weight:normal">Snap to object bounding boxes</div><div class="a" style="left:722px;top:581.4px;width:11px;height:11px;border-radius:2px;background:#2c2c2c"></div><svg class="a" style="left:722px;top:581.4px" width="11" height="11"><path d="M2.3 5.3 L4.4 7.4 L8.7 2.7" fill="none" stroke="#e8e8e8" stroke-width="1.25"/></svg><div class="t" style="left:735.8px;top:580.7px;font-size:11px;color:#e8e8e8;font-weight:normal">Include bounding box mid points</div><div class="a" style="left:722px;top:601.5px;width:11px;height:11px;border-radius:2px;background:#2c2c2c"></div><svg class="a" style="left:722px;top:601.5px" width="11" height="11"><path d="M2.3 5.3 L4.4 7.4 L8.7 2.7" fill="none" stroke="#e8e8e8" stroke-width="1.25"/></svg><div class="t" style="left:735.8px;top:600.8px;font-size:11px;color:#e8e8e8;font-weight:normal">Snap to gaps and sizes</div><div class="a" style="left:704px;top:621.6px;width:11px;height:11px;border-radius:2px;background:#2c2c2c"></div><svg class="a" style="left:704px;top:621.6px" width="11" height="11"><path d="M2.3 5.3 L4.4 7.4 L8.7 2.7" fill="none" stroke="#e8e8e8" stroke-width="1.25"/></svg><div class="t" style="left:717.8px;top:620.9px;font-size:11px;color:#e8e8e8;font-weight:normal">Snap to shape key points</div><div class="a" style="left:704px;top:640.5px;width:11px;height:11px;border-radius:2px;background:#2c2c2c"></div><svg class="a" style="left:704px;top:640.5px" width="11" height="11"><path d="M2.3 5.3 L4.4 7.4 L8.7 2.7" fill="none" stroke="#e8e8e8" stroke-width="1.25"/></svg><div class="t" style="left:717.8px;top:639.8px;font-size:11px;color:#e8e8e8;font-weight:normal">Snap to object geometry</div><div class="a" style="left:704px;top:659.3px;width:11px;height:11px;border-radius:2px;background:#2c2c2c"></div><svg class="a" style="left:704px;top:659.3px" width="11" height="11"><path d="M2.3 5.3 L4.4 7.4 L8.7 2.7" fill="none" stroke="#e8e8e8" stroke-width="1.25"/></svg><div class="t" style="left:717.8px;top:658.6px;font-size:11px;color:#e8e8e8;font-weight:normal">Snap to pixel selection bounds</div><div class="a" style="left:906.5px;top:695.5px;width:73px;height:20px;background:#484848;border-radius:3px"></div><div class="t" style="left:906.5px;top:699.3px;width:73px;text-align:center;color:#f4f4f4">Close</div>
<div class="a" style="left:0;top:745px;width:1275px;height:19px;background:#3b3b3b"></div>
<div class="t" style="left:17px;top:748.5px;color:#b4b4b4"><b style="color:#fafafa">Drag</b> to marquee select. <b style="color:#fafafa">Click</b> an object to select it.</div>
<div class="a" style="left:1010px;top:83px;width:265px;height:662px;background:#252525;"></div><div class="a" style="left:1010px;top:83px;width:263px;height:28px;background:#2d2d2d;"></div><svg class="a" style="left:1016px;top:90.5px" width="6" height="12"><path d="M1.5 1 V11 M4.5 1 V11" stroke="#505050" stroke-width="1"/></svg><div class="t" style="left:1034.6px;top:89.5px;font-size:11px;color:#e0e0e0;font-weight:normal;">Transform</div><div class="t" style="left:1095px;top:89.5px;font-size:11px;color:#e0e0e0;font-weight:normal;">Color</div><div class="t" style="left:1133px;top:89.5px;font-size:11px;color:#e0e0e0;font-weight:normal;">Navigator</div><div class="t" style="left:1192px;top:89.5px;font-size:11px;color:#e0e0e0;font-weight:normal;">History</div><div class="a" style="left:1186px;top:83px;width:1px;height:28px;background:#262626;"></div><svg class="a" style="left:1255px;top:90.5px" width="12" height="12"><path d="M0 1.5 H11 M0 5.5 H11 M0 9.5 H11" stroke="#d0d0d0" stroke-width="1.8"/></svg><div class="a" style="left:1010px;top:111px;width:265px;height:2px;background:#1b1b1b;"></div><div class="a" style="left:1010px;top:113px;width:263px;height:27px;background:#2d2d2d;"></div><div class="a" style="left:1028px;top:113px;width:44px;height:27px;background:#3c3c3c;"></div><svg class="a" style="left:1016px;top:120.5px" width="6" height="12"><path d="M1.5 1 V11 M4.5 1 V11" stroke="#505050" stroke-width="1"/></svg><div class="t" style="left:1033.6px;top:119.5px;font-size:11px;color:#f4f4f4;font-weight:normal;">Layers</div><div class="t" style="left:1078px;top:119.5px;font-size:11px;color:#e0e0e0;font-weight:normal;">Glyph Browser</div><div class="t" style="left:1161px;top:119.5px;font-size:11px;color:#e0e0e0;font-weight:normal;">Snapshots</div><div class="a" style="left:1154px;top:113px;width:1px;height:27px;background:#262626;"></div><svg class="a" style="left:1255px;top:120.5px" width="12" height="12"><path d="M0 1.5 H11 M0 5.5 H11 M0 9.5 H11" stroke="#d0d0d0" stroke-width="1.8"/></svg><div class="a" style="left:1010px;top:140px;width:263px;height:33px;background:#3e3e3e;"></div><div class="t" style="left:1015px;top:150.5px;font-size:11px;color:#e6e6e6;font-weight:normal;">Opacity:</div><div class="t" style="left:1061px;top:150.5px;font-size:11px;color:#b0b0b0;font-weight:normal;">100 %</div><svg class="a" style="left:1104px;top:153px" width="10" height="10"><path d="M2.5 3.5 L5 6 L7.5 3.5" fill="none" stroke="#888" stroke-width="1"/></svg><div class="a" style="left:1117px;top:145px;width:108px;height:24px;background:#414141;"></div><div class="t" style="left:1122.5px;top:150.5px;font-size:11px;color:#b0b0b0;font-weight:normal;">Normal</div><svg class="a" style="left:1213px;top:150px" width="11" height="15"><path d="M3 5 L5.5 2.5 L8 5 M3 10 L5.5 12.5 L8 10" fill="none" stroke="#888" stroke-width="1"/></svg><svg class="a" style="left:1233px;top:151px" width="13" height="13"><polygon points="13.0,6.5 12.9,7.8 10.9,8.3 10.5,9.2 11.1,11.1 10.1,11.9 8.3,10.9 7.4,11.2 6.5,13.0 5.2,12.9 4.7,10.9 3.8,10.5 1.9,11.1 1.1,10.1 2.1,8.3 1.8,7.4 0.0,6.5 0.1,5.2 2.1,4.7 2.5,3.8 1.9,1.9 2.9,1.1 4.7,2.1 5.6,1.8 6.5,0.0 7.8,0.1 8.3,2.1 9.2,2.5 11.1,1.9 11.9,2.9 10.9,4.7 11.2,5.6" fill="#bbb"/><circle cx="6.5" cy="6.5" r="2.2" fill="#3e3e3e"/></svg><svg class="a" style="left:1253px;top:149px" width="12" height="16"><path d="M2.5 7 V4.5 A3.5 3.5 0 0 1 9.5 4.5 V5.5" fill="none" stroke="#999" stroke-width="1.6"/><rect x="1" y="7" width="10" height="8" rx="1" fill="#999"/></svg><div class="a" style="left:1010px;top:173px;width:265px;height:1px;background:#1e1e1e;"></div><div class="a" style="left:1010px;top:174px;width:263px;height:49px;background:#3c3c3c;"></div><div class="a" style="left:1026px;top:174px;width:1px;height:49px;background:#2e2e2e;"></div><div class="a" style="left:1027px;top:174px;width:48px;height:49px;background:#2f2f2f;"></div><div class="a" style="left:1028.5px;top:176.5px;width:45px;height:45px;background:#e9e9e9;background-color:#e8e8e8;background-image:linear-gradient(45deg,#c0c0c0 25%,transparent 25%,transparent 75%,#c0c0c0 75%),linear-gradient(45deg,#c0c0c0 25%,transparent 25%,transparent 75%,#c0c0c0 75%);background-size:4px 4px;background-position:0 0,2px 2px;"></div><svg class="a" style="left:1013px;top:180px" width="11" height="12"><path d="M0.5 1 H10.5 M0.5 3.5 H10.5 M0.5 6 H10.5 M0.5 8.5 H10.5 M0.5 11 H10.5" stroke="#d9534f" stroke-width="1.2"/></svg><svg class="a" style="left:1013px;top:206px" width="10" height="8"><path d="M1.5 2 L5 5.5 L8.5 2" fill="none" stroke="#ccc" stroke-width="1.1"/></svg><div class="t" style="left:1086px;top:193.5px;font-size:11px;color:#f6f6f6;font-weight:normal;text-shadow:0 0 0.8px #fff,0 0 0.4px #fff">Guides</div><svg class="a" style="left:1231px;top:190px" width="12" height="16"><path d="M3 7 V5 A3 3 0 0 1 9 5 V7" fill="none" stroke="#bdbdbd" stroke-width="1.6"/><rect x="1.5" y="7" width="9" height="7.5" rx="0.8" fill="#bdbdbd"/></svg><div class="a" style="left:1248px;top:193px;width:9px;height:9px;border-radius:5px;background:#bdbdbd"></div><div class="a" style="left:1010px;top:223px;width:263px;height:1px;background:#2a2a2a;"></div><div class="a" style="left:1010px;top:224px;width:263px;height:48px;background:#3c3c3c;"></div><div class="a" style="left:1018px;top:224px;width:1px;height:48px;background:#2e2e2e;"></div><div class="a" style="left:1035.5px;top:224px;width:48.5px;height:48px;background:#2f2f2f;"></div><div class="a" style="left:1037.5px;top:225.5px;width:45px;height:45px;background:#e9e9e9;background-color:#e8e8e8;background-image:linear-gradient(45deg,#c0c0c0 25%,transparent 25%,transparent 75%,#c0c0c0 75%),linear-gradient(45deg,#c0c0c0 25%,transparent 25%,transparent 75%,#c0c0c0 75%);background-size:4px 4px;background-position:0 0,2px 2px;"></div><svg class="a" style="left:1019px;top:240px" width="14" height="16"><circle cx="4" cy="2.5" r="1.6" fill="#c8c8c8"/><circle cx="4" cy="13" r="1.6" fill="#c8c8c8"/><path d="M4 2.5 L4 13 M1.5 7.8 L6.5 7.8" stroke="#c8c8c8" stroke-width="1"/><path d="M11 2 Q6 7.8 11 13.5" fill="none" stroke="#c8c8c8" stroke-width="1.2"/></svg><div class="t" style="left:1095px;top:242.5px;font-size:11px;color:#7a7a7a;font-weight:normal;">Curve</div><div class="a" style="left:1248px;top:244.5px;width:9px;height:9px;border-radius:5px;background:#bdbdbd"></div><div class="a" style="left:1010px;top:272px;width:263px;height:1px;background:#2a2a2a;"></div><div class="a" style="left:1010px;top:273px;width:263px;height:48px;background:#3c3c3c;"></div><div class="a" style="left:1018px;top:273px;width:1px;height:48px;background:#2e2e2e;"></div><div class="a" style="left:1035.5px;top:273px;width:48.5px;height:48px;background:#2f2f2f;"></div><div class="a" style="left:1037.5px;top:274.5px;width:45px;height:45px;background:#e9e9e9;background-color:#e8e8e8;background-image:linear-gradient(45deg,#c0c0c0 25%,transparent 25%,transparent 75%,#c0c0c0 75%),linear-gradient(45deg,#c0c0c0 25%,transparent 25%,transparent 75%,#c0c0c0 75%);background-size:4px 4px;background-position:0 0,2px 2px;"></div><svg class="a" style="left:1019px;top:289px" width="14" height="16"><circle cx="4" cy="2.5" r="1.6" fill="#c8c8c8"/><circle cx="4" cy="13" r="1.6" fill="#c8c8c8"/><path d="M4 2.5 L4 13 M1.5 7.8 L6.5 7.8" stroke="#c8c8c8" stroke-width="1"/><path d="M11 2 Q6 7.8 11 13.5" fill="none" stroke="#c8c8c8" stroke-width="1.2"/></svg><div class="t" style="left:1095px;top:291.5px;font-size:11px;color:#7a7a7a;font-weight:normal;">Curve</div><div class="a" style="left:1248px;top:293.5px;width:9px;height:9px;border-radius:5px;background:#bdbdbd"></div><div class="a" style="left:1010px;top:321px;width:263px;height:1px;background:#2a2a2a;"></div><div class="a" style="left:1266.7px;top:174px;width:6.3px;height:147px;background:#c0625a;"></div><div class="a" style="left:1010px;top:321.5px;width:263px;height:49px;background:#2c4a24;"></div><div class="a" style="left:1026px;top:321.5px;width:1px;height:49px;background:#274020;"></div><div class="a" style="left:1028.5px;top:324px;width:45px;height:45px;background:#e9e9e9;background-color:#e8e8e8;background-image:linear-gradient(45deg,#c0c0c0 25%,transparent 25%,transparent 75%,#c0c0c0 75%),linear-gradient(45deg,#c0c0c0 25%,transparent 25%,transparent 75%,#c0c0c0 75%);background-size:4px 4px;background-position:0 0,2px 2px;"></div><svg class="a" style="left:1028.5px;top:324px" width="45" height="45"><path d="M3 28 L20 10 L26 14 L26 32 L38 32 M3 28 L26 40" fill="none" stroke="#777" stroke-width="0.6"/></svg><svg class="a" style="left:1013px;top:328px" width="11" height="12"><path d="M0.5 1 H10.5 M0.5 3.5 H10.5 M0.5 6 H10.5 M0.5 8.5 H10.5 M0.5 11 H10.5" stroke="#4a86d0" stroke-width="1.2"/></svg><svg class="a" style="left:1013px;top:354px" width="10" height="8"><path d="M1.5 2 L5 5.5 L8.5 2" fill="none" stroke="#ccc" stroke-width="1.1"/></svg><div class="t" style="left:1086px;top:340.5px;font-size:11px;color:#f6f6f6;font-weight:normal;text-shadow:0 0 0.8px #fff,0 0 0.4px #fff">Working Layer</div><div class="a" style="left:1248px;top:341.5px;width:9px;height:9px;border-radius:5px;background:#bdbdbd"></div><div class="a" style="left:1010px;top:370.5px;width:263px;height:1px;background:#2a2a2a;"></div><div class="a" style="left:1010px;top:371px;width:263px;height:47px;background:#3c3c3c;"></div><div class="a" style="left:1018px;top:371px;width:1px;height:47px;background:#2e2e2e;"></div><div class="a" style="left:1035.5px;top:371px;width:48.5px;height:47px;background:#2f2f2f;"></div><div class="a" style="left:1037.5px;top:372.5px;width:45px;height:45px;background:#e9e9e9;background-color:#e8e8e8;background-image:linear-gradient(45deg,#c0c0c0 25%,transparent 25%,transparent 75%,#c0c0c0 75%),linear-gradient(45deg,#c0c0c0 25%,transparent 25%,transparent 75%,#c0c0c0 75%);background-size:4px 4px;background-position:0 0,2px 2px;"></div><svg class="a" style="left:1019px;top:387px" width="14" height="16"><circle cx="4" cy="2.5" r="1.6" fill="#c8c8c8"/><circle cx="4" cy="13" r="1.6" fill="#c8c8c8"/><path d="M4 2.5 L4 13 M1.5 7.8 L6.5 7.8" stroke="#c8c8c8" stroke-width="1"/><path d="M11 2 Q6 7.8 11 13.5" fill="none" stroke="#c8c8c8" stroke-width="1.2"/></svg><div class="t" style="left:1095px;top:389.5px;font-size:11px;color:#7a7a7a;font-weight:normal;">Curve</div><div class="a" style="left:1248px;top:391.5px;width:9px;height:9px;border-radius:5px;background:#bdbdbd"></div><div class="a" style="left:1010px;top:418px;width:263px;height:1px;background:#2a2a2a;"></div><svg class="a" style="left:1037.5px;top:373px" width="45" height="45"><path d="M4 26 L20 8 L25 12 L25 30 L38 30 M4 26 L25 40" fill="none" stroke="#777" stroke-width="0.6"/></svg><div class="a" style="left:1010px;top:419px;width:265px;height:232px;background:#242424;"></div><div class="a" style="left:1010px;top:651px;width:263px;height:34px;background:#424242;"></div><div class="a" style="left:1014px;top:657px;width:23px;height:23px;border-radius:3px;background:#333"></div><svg class="a" style="left:0;top:0" width="1275" height="764"><rect x="1019" y="662" width="8" height="8" fill="none" stroke="#cfcfcf" stroke-width="1.1"/><path d="M1029 665 V672 H1022 M1031 667 V674 H1024" fill="none" stroke="#cfcfcf" stroke-width="1.1"/><rect x="1091" y="660" width="17" height="14" fill="#cfcfcf"/><circle cx="1099.5" cy="667" r="3.5" fill="#333"/><circle cx="1122.6" cy="667" r="7" fill="none" stroke="#cfcfcf" stroke-width="1.1"/><path d="M1127.5 662 A7 7 0 0 1 1117.7 672 Z" fill="#cfcfcf"/><text x="1137" y="673" font-family="Liberation Sans" font-size="12" font-weight="bold" fill="#cfcfcf">FX</text><path d="M1137 660 H1151 M1137 675 H1151" stroke="#cfcfcf" stroke-width="0.9"/><path d="M1158 674 L1160 661 Q1166 659 1172 661 L1173 674 Z M1163 661 L1162 674 M1167 660 L1167 674 M1159 665 H1173 M1158.5 669.5 H1173" fill="none" stroke="#cfcfcf" stroke-width="1.1"/><path d="M1208 659 H1216 L1219 662 V676 H1208 Z M1210 665 H1216 M1210 668 H1216 M1210 671 H1216 M1219 657 V663 M1216 660 H1222" fill="none" stroke="#cfcfcf" stroke-width="1.1"/><rect x="1232" y="659" width="12" height="17" fill="none" stroke="#cfcfcf" stroke-width="1.1"/><rect x="1235.0" y="662" width="2" height="2" fill="#cfcfcf"/><rect x="1238.0" y="662" width="2" height="2" fill="#cfcfcf"/><rect x="1236.5" y="665" width="2" height="2" fill="#cfcfcf"/><rect x="1239.5" y="665" width="2" height="2" fill="#cfcfcf"/><rect x="1235.0" y="668" width="2" height="2" fill="#cfcfcf"/><rect x="1238.0" y="668" width="2" height="2" fill="#cfcfcf"/><rect x="1236.5" y="671" width="2" height="2" fill="#cfcfcf"/><rect x="1239.5" y="671" width="2" height="2" fill="#cfcfcf"/><path d="M1255 661 H1268 M1259 661 V659 H1264 V661 M1256 663 L1257 676 H1266 L1267 663 M1259 664 V674 M1261.5 664 V674 M1264 664 V674" fill="none" stroke="#cfcfcf" stroke-width="1.1"/></svg><div class="a" style="left:1010px;top:685px;width:265px;height:1.5px;background:#1b1b1b;"></div><div class="a" style="left:1010px;top:686.5px;width:263px;height:28.5px;background:#2d2d2d;"></div><svg class="a" style="left:1016px;top:694.5px" width="6" height="12"><path d="M1.5 1 V11 M4.5 1 V11" stroke="#505050" stroke-width="1"/></svg><div class="t" style="left:1033.8px;top:693.5px;font-size:11px;color:#e0e0e0;font-weight:normal;">Swatches</div><div class="t" style="left:1092.6px;top:693.5px;font-size:11px;color:#e0e0e0;font-weight:normal;">Stroke</div><div class="t" style="left:1136.8px;top:693.5px;font-size:11px;color:#e0e0e0;font-weight:normal;">Constraints</div><div class="t" style="left:1204.4px;top:693.5px;font-size:11px;color:#e0e0e0;font-weight:normal;">States</div><div class="a" style="left:1198.5px;top:686.5px;width:1px;height:28.5px;background:#262626;"></div><svg class="a" style="left:1255px;top:694.5px" width="12" height="12"><path d="M0 1.5 H11 M0 5.5 H11 M0 9.5 H11" stroke="#d0d0d0" stroke-width="1.8"/></svg><div class="a" style="left:1010px;top:715px;width:265px;height:2px;background:#1b1b1b;"></div><div class="a" style="left:1010px;top:717px;width:263px;height:28px;background:#2d2d2d;"></div><svg class="a" style="left:1016px;top:724.5px" width="6" height="12"><path d="M1.5 1 V11 M4.5 1 V11" stroke="#505050" stroke-width="1"/></svg><div class="t" style="left:1033.8px;top:723.5px;font-size:11px;color:#e0e0e0;font-weight:normal;">Text Styles</div><div class="t" style="left:1098.5px;top:723.5px;font-size:11px;color:#e0e0e0;font-weight:normal;">Character</div><div class="t" style="left:1158.8px;top:723.5px;font-size:11px;color:#e0e0e0;font-weight:normal;">Paragraph</div><svg class="a" style="left:1255px;top:724.5px" width="12" height="12"><path d="M0 1.5 H11 M0 5.5 H11 M0 9.5 H11" stroke="#d0d0d0" stroke-width="1.8"/></svg><div class="a" style="left:1273px;top:83px;width:2px;height:662px;background:#1e1e1e;"></div>
<svg class="a" style="left:0;top:0" width="1275" height="764"><defs><filter id="sh" x="-5%" y="-5%" width="110%" height="110%"><feDropShadow dx="0" dy="1" stdDeviation="1" flood-color="#000" flood-opacity="0.3"/></filter></defs><g filter="url(#sh)"><rect x="789.8" y="4.8" width="46" height="33.6" fill="none" stroke="#e2432b" stroke-width="3"/><rect x="977.5" y="48.5" width="189" height="32" fill="none" stroke="#e2432b" stroke-width="3"/><rect x="1223.8" y="181.6" width="27.5" height="33" fill="none" stroke="#e2432b" stroke-width="3.5"/><line x1="1047.7" y1="237.2" x2="442.5" y2="283.1" stroke="#e2432b" stroke-width="3"/><polygon points="430,284 443.9,275.9 445.0,289.9" fill="#e2432b"/><line x1="1043.3" y1="294.3" x2="335.6" y2="205.9" stroke="#e2432b" stroke-width="3"/><polygon points="323.2,204.3 338.5,199.2 336.7,213.0" fill="#e2432b"/><line x1="1030.2" y1="397.9" x2="482.0" y2="421.9" stroke="#e2432b" stroke-width="3"/><polygon points="469.5,422.4 483.7,414.8 484.3,428.8" fill="#e2432b"/><line x1="801.7" y1="40" x2="790.6" y2="529.8" stroke="#e2432b" stroke-width="3.3"/><polygon points="790.3,542.3 783.6,527.6 797.6,528.0" fill="#e2432b"/></g></svg>
</body></html>
